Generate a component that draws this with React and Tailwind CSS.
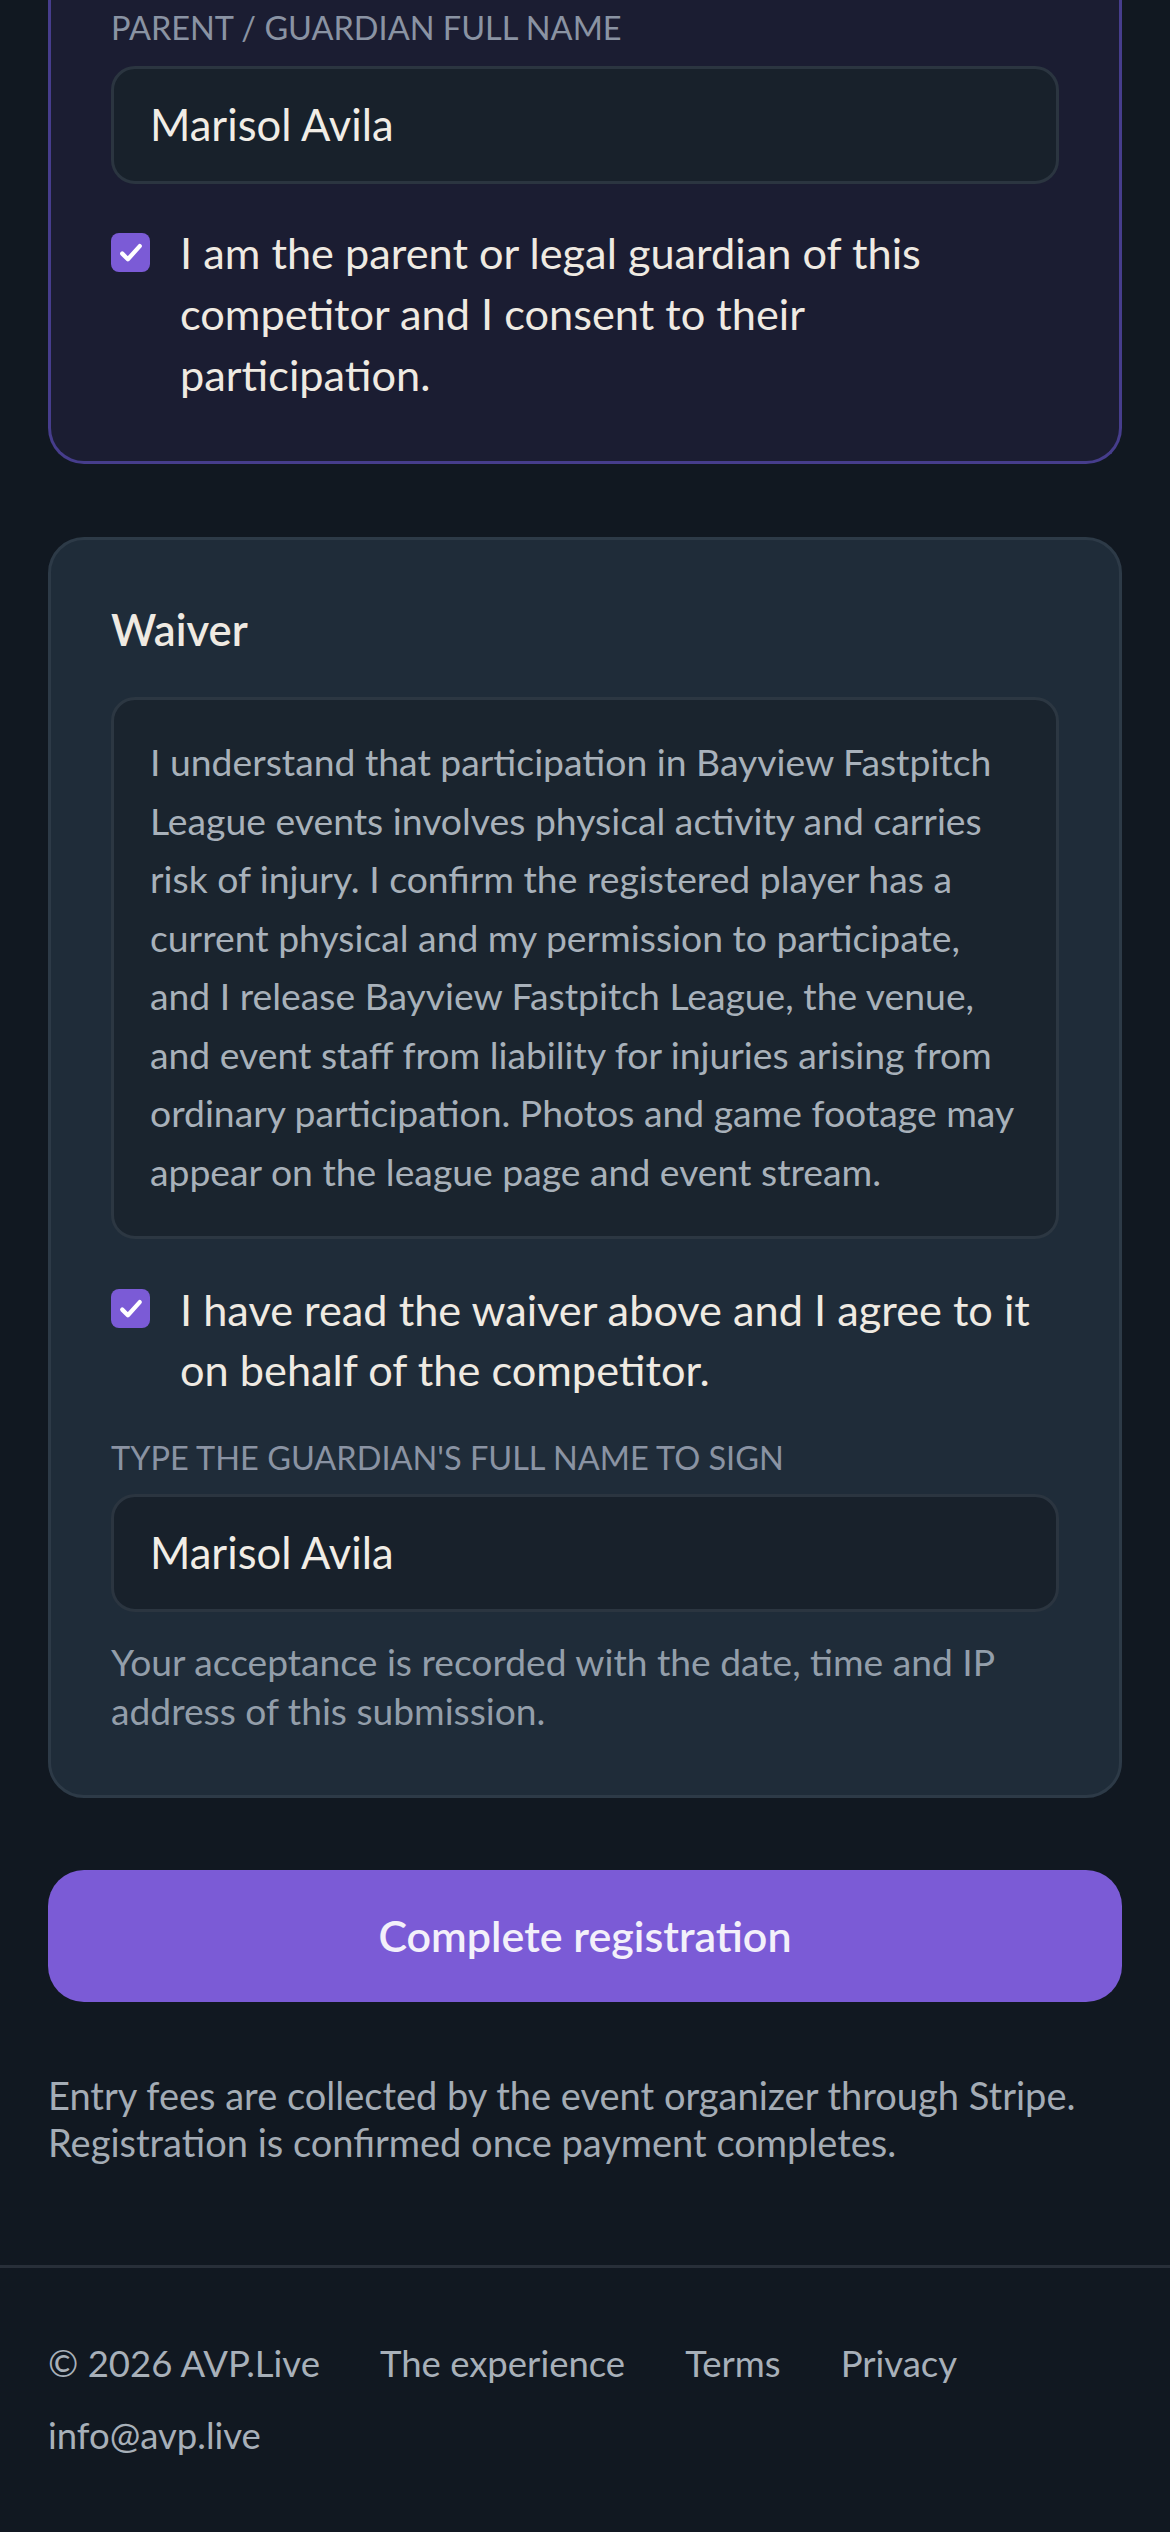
import React from "react";

function Check() {
  return (
    <span className="flex h-[39px] w-[39px] shrink-0 items-center justify-center rounded-[8px] bg-[#7b5bd6]">
      <svg viewBox="0 0 24 24" className="h-[30px] w-[30px]" fill="none">
        <path d="M5 12.5l4.5 4.5L19 6.5" stroke="#ffffff" strokeWidth="3.4" strokeLinecap="round" strokeLinejoin="round" />
      </svg>
    </span>
  );
}

export default function App() {
  return (
    <div className="min-h-screen bg-[#111821] font-['Lato','Noto_Sans',sans-serif]">
      <main className="px-[48px]">
        <section className="rounded-b-[36px] border-[3px] border-t-0 border-[#463d8c] bg-[#1b1d32] px-[60px] pb-[56px] pt-[7px]">
          <div className="text-[32.5px] leading-[42px] uppercase text-[#8a93a3]">
            Parent / Guardian full name
          </div>
          <div className="mt-[17px] flex h-[118px] items-center rounded-[24px] border-[3px] border-[#2b3540] bg-[#18212b] px-[36px] text-[43.5px] text-[#f1ede6]">
            Marisol Avila
          </div>
          <div className="mt-[38px] flex gap-[30px]">
            <div className="mt-[11px]">
              <Check />
            </div>
            <p className="text-[43.3px] leading-[61px] text-[#efeae2]">
              I am the parent or legal guardian of this competitor and I consent to their participation.
            </p>
          </div>
        </section>

        <section className="mt-[73px] rounded-[36px] border-[3px] border-[#2d3a47] bg-[#1f2c39] px-[60px] pb-[60px] pt-[60px]">
          <h2 className="text-[43.5px] font-semibold leading-[58px] text-[#efeae2]">Waiver</h2>
          <div className="mt-[39px] rounded-[24px] border-[3px] border-[#2c3742] bg-[#1a242e] px-[36px] pb-[35px] pt-[33px]">
            <p className="text-[37.3px] leading-[58.5px] text-[#a8b1ba]">
              I understand that participation in Bayview Fastpitch League events involves physical activity and carries risk of injury. I confirm the registered player has a current physical and my permission to participate, and I release Bayview Fastpitch League, the venue, and event staff from liability for injuries arising from ordinary participation. Photos and game footage may appear on the league page and event stream.
            </p>
          </div>
          <div className="mt-[40px] flex gap-[30px]">
            <div className="mt-[10px]">
              <Check />
            </div>
            <p className="text-[43.3px] leading-[60px] text-[#efeae2]">
              I have read the waiver above and I agree to it on behalf of the competitor.
            </p>
          </div>
          <div className="mt-[38px] text-[32.5px] leading-[42px] uppercase text-[#8a93a3]">
            Type the guardian's full name to sign
          </div>
          <div className="mt-[15px] flex h-[118px] items-center rounded-[24px] border-[3px] border-[#2b3540] bg-[#18212b] px-[36px] text-[43.5px] text-[#f1ede6]">
            Marisol Avila
          </div>
          <p className="mt-[25px] text-[37.2px] leading-[49px] text-[#939eaa]">
            Your acceptance is recorded with the date, time and IP address of this submission.
          </p>
        </section>

        <button className="mt-[72px] flex h-[132px] w-full items-center justify-center rounded-[36px] bg-[#7b5bd6] text-[43px] font-semibold text-[#f3f0fa]">
          Complete registration
        </button>

        <p className="mt-[70px] text-[38px] leading-[47px] text-[#a4acb5]">
          Entry fees are collected by the event organizer through Stripe. Registration is confirmed once payment completes.
        </p>
      </main>

      <footer className="mt-[99px] border-t-[3px] border-[#282f39] px-[48px] pb-[72px] pt-[71px]">
        <div className="flex flex-wrap gap-x-[60px] gap-y-[24px] text-[36.5px] leading-[48px] text-[#a8b0b9]">
          <span>© 2026 AVP.Live</span>
          <span>The experience</span>
          <span>Terms</span>
          <span>Privacy</span>
          <span>info@avp.live</span>
        </div>
      </footer>
    </div>
  );
}
